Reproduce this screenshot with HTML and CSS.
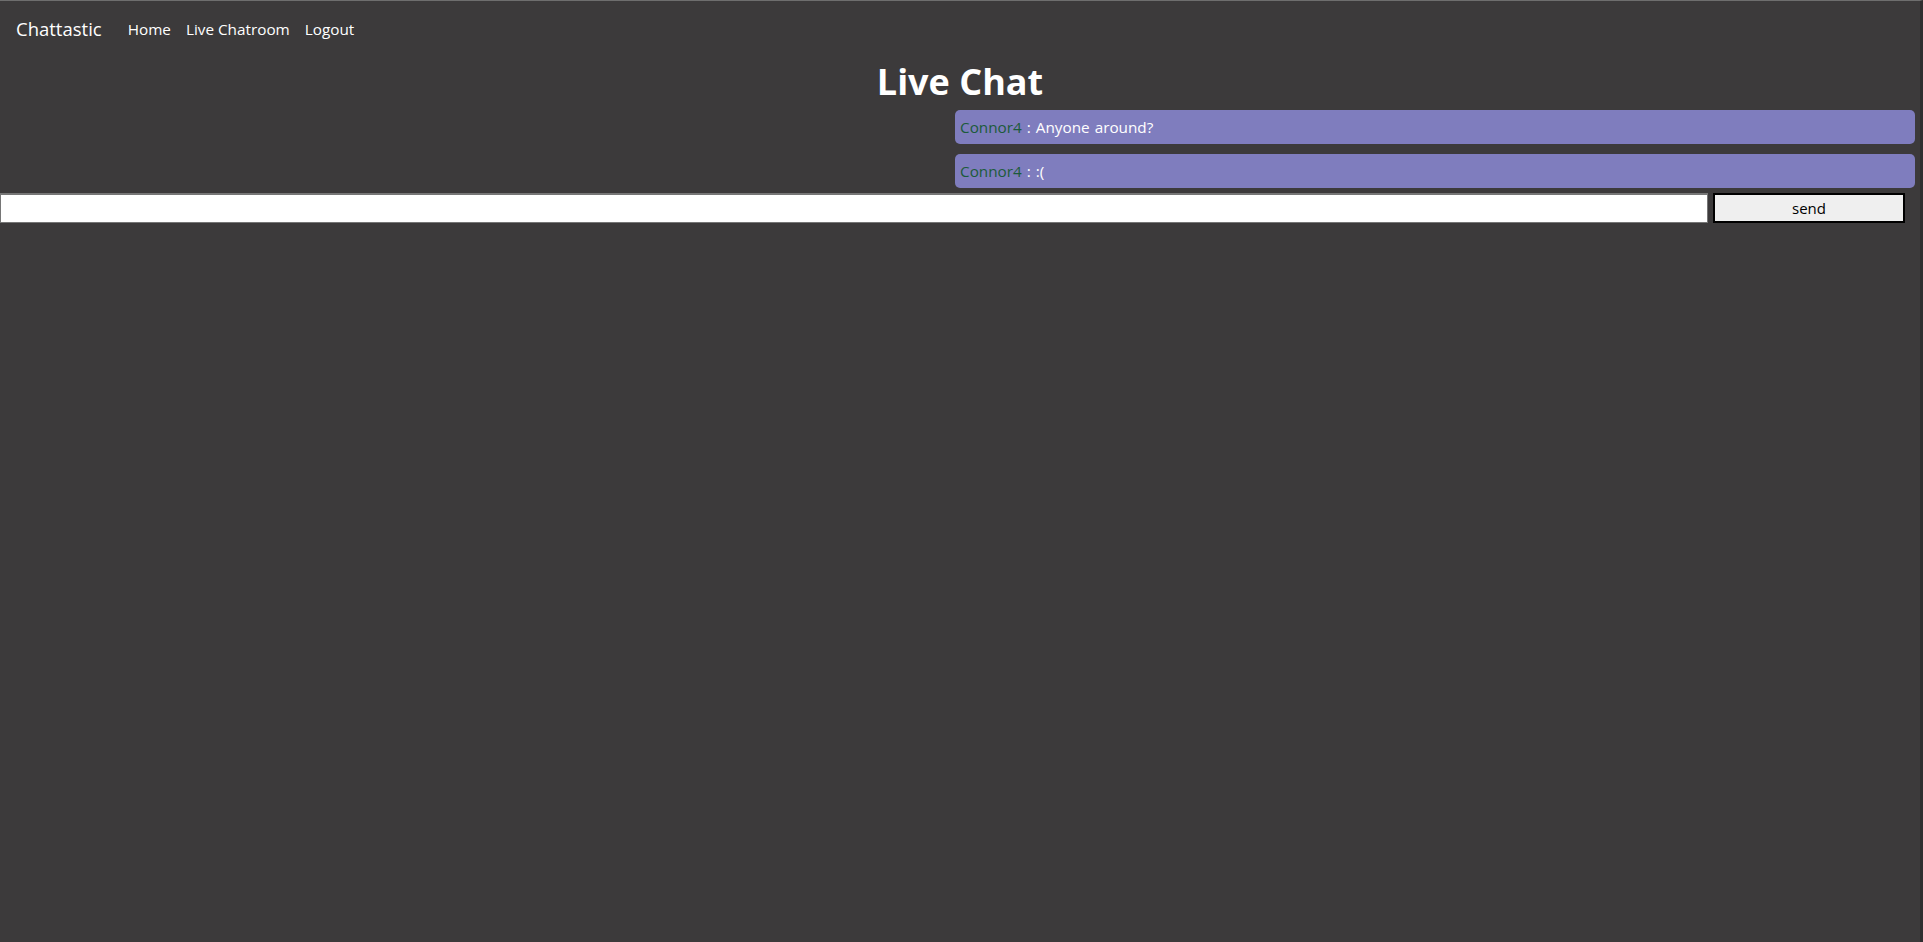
FILE: index.html
```html
<!DOCTYPE html>
<html lang="en">
<head>
<meta charset="utf-8">
<title>Chattastic</title>
<link rel="stylesheet" href="styles.css">
</head>
<body>
<nav class="navbar">
  <a class="brand" href="#">Chattastic</a>
  <ul class="nav-links">
    <li><a href="#">Home</a></li>
    <li><a href="#">Live Chatroom</a></li>
    <li><a href="#">Logout</a></li>
  </ul>
</nav>
<main class="chat">
  <h1 class="title">Live Chat</h1>
  <div class="messages">
    <div class="message"><span class="author">Connor4</span> : Anyone around?</div>
    <div class="message"><span class="author">Connor4</span> : :(</div>
  </div>
  <form class="composer">
    <input class="composer-input" type="text">
    <button class="composer-send" type="button">send</button>
  </form>
</main>
</body>
</html>
```
FILE: styles.css
```css
html, body {
  margin: 0;
  padding: 0;
}
body {
  background: #3c3a3b;
  color: #ffffff;
  font-family: "Open Sans", "Noto Sans", sans-serif;
  font-size: 15px;
  min-height: 942px;
  box-sizing: border-box;
  border-top: 1px solid #6e6e6e;
  border-right: 3px solid #2f2e2f;
}
.navbar {
  display: flex;
  align-items: center;
  padding: 6px 16px 10px;
  height: 43px;
}
.brand {
  color: #ffffff;
  text-decoration: none;
  font-size: 18.5px;
  margin-right: 26px;
}
.nav-links {
  display: flex;
  list-style: none;
  margin: 0;
  padding: 0;
  gap: 15px;
}
.nav-links a {
  color: #ffffff;
  text-decoration: none;
  font-size: 15.3px;
}
.chat {
  display: flex;
  flex-direction: column;
}
.title {
  margin: 0 0 6px;
  text-align: center;
  font-size: 36px;
  font-weight: 700;
  line-height: 44px;
}
.messages {
  display: flex;
  flex-direction: column;
  align-items: flex-end;
  gap: 10px;
  padding-right: 5px;
}
.message {
  width: 960px;
  box-sizing: border-box;
  height: 34px;
  line-height: 34px;
  padding: 0 5px;
  background: #7f7dbe;
  border-radius: 5px;
  color: #ffffff;
  font-size: 15.3px;
  word-spacing: 1px;
}
.author {
  color: #1c5b3a;
}
.composer {
  display: flex;
  gap: 5px;
  margin: 5px 0 0;
  padding-right: 15px;
}
.composer-input {
  flex: 1;
  height: 30px;
  box-sizing: border-box;
  margin: 0;
  border: 1px solid #767676;
  border-top-width: 2px;
  background: #ffffff;
}
.composer-send {
  width: 192px;
  height: 30px;
  box-sizing: border-box;
  margin: 0;
  border: 2px solid #000000;
  background: #efefef;
  color: #000000;
  font-family: "Open Sans", "Noto Sans", sans-serif;
  font-size: 15px;
  padding: 0;
}
```
